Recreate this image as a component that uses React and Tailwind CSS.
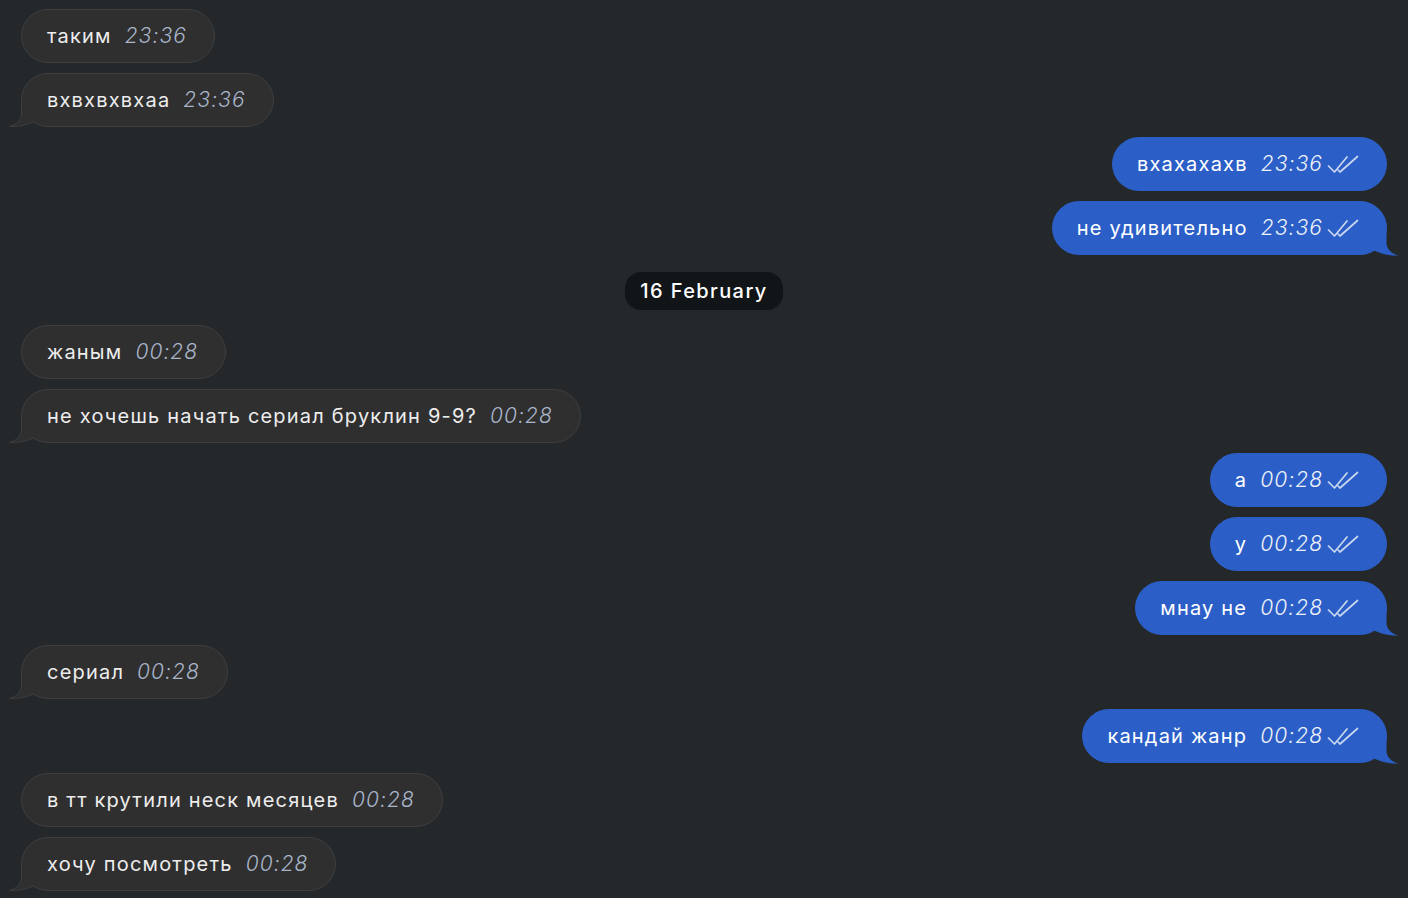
import React from 'react';

const messages = [
  { out: false, text: 'таким', time: '23:36' },
  { out: false, text: 'вхвхвхвхаа', time: '23:36', tail: true },
  { out: true, text: 'вхахахахв', time: '23:36' },
  { out: true, text: 'не удивительно', time: '23:36', tail: true },
  { date: '16 February' },
  { out: false, text: 'жаным', time: '00:28' },
  { out: false, text: 'не хочешь начать сериал бруклин 9-9?', time: '00:28', tail: true },
  { out: true, text: 'а', time: '00:28' },
  { out: true, text: 'у', time: '00:28' },
  { out: true, text: 'мнау не', time: '00:28', tail: true },
  { out: false, text: 'сериал', time: '00:28', tail: true },
  { out: true, text: 'кандай жанр', time: '00:28', tail: true },
  { out: false, text: 'в тт крутили неск месяцев', time: '00:28' },
  { out: false, text: 'хочу посмотреть', time: '00:28', tail: true },
];

const DoubleCheck = () => (
  <svg width="32" height="20" viewBox="0 0 32 20" fill="none" stroke="#c9d6ef" strokeWidth="1.7" strokeLinecap="round" strokeLinejoin="round">
    <path d="M1.5 12 L7.5 18 L20 3" />
    <path d="M11 16 L13 18 L30.5 2.5" />
  </svg>
);

// tail drawn over the bottom corner of a bubble
const Tail = ({ out }) => {
  const fill = out ? '#2b5fc7' : '#2f2f30';
  return (
    <svg
      width="50"
      height="30"
      viewBox="0 0 50 30"
      className={`absolute bottom-[-1px] pointer-events-none ${out ? 'right-[-12px] -scale-x-100' : 'left-[-13px]'}`}
    >
      <path
        d="M12.5 3 L12.5 17 C12.5 23 7 28 0.5 29.5 C8 30 18 28 25 24.5 L36 8 Z"
        fill={fill}
      />
      {!out && (
        <path
          d="M12.5 3 L12.5 17 C12.5 23 7 28 0.5 29.5 C8 30 18 28 25 24.5"
          fill="none"
          stroke="#3d3e40"
          strokeWidth="1"
        />
      )}
    </svg>
  );
};

const Bubble = ({ msg }) => (
  <div className={`flex ${msg.out ? 'justify-end' : 'justify-start'}`}>
    <div
      className={`relative h-[54px] flex items-center rounded-full pl-[25px] ${
        msg.out
          ? 'bg-[#2b5fc7] pr-[28px] text-white'
          : 'bg-[#2f2f30] border border-[#3d3e40] pr-[27px] text-[#ededed]'
      }`}
    >
      <span className="text-[20px] tracking-[0.06em] whitespace-nowrap">{msg.text}</span>
      <span
        className={`ml-[13px] text-[21px] italic font-light tracking-[0.05em] ${msg.out ? 'text-[#eef2fa]' : 'text-[#a9b5c9]'}`}
      >
        {msg.time}
      </span>
      {msg.out && (
        <span className="ml-[4px] flex items-center">
          <DoubleCheck />
        </span>
      )}
      {msg.tail && <Tail out={msg.out} />}
    </div>
  </div>
);

export default function App() {
  return (
    <div
      className="w-[1408px] h-[898px] overflow-hidden bg-[#25282a] px-[21px] pt-[9px]"
      style={{ fontFamily: 'Inter, "Noto Sans", sans-serif' }}
    >
      <div className="flex flex-col gap-[10px]">
        {messages.map((m, i) =>
          m.date ? (
            <div key={i} className="flex justify-center pt-[7px] pb-[5px]">
              <span className="h-[38px] px-[15px] flex items-center rounded-[16px] bg-[#121518] text-white text-[20px] font-medium tracking-[0.07em]">
                {m.date}
              </span>
            </div>
          ) : (
            <Bubble key={i} msg={m} />
          )
        )}
      </div>
    </div>
  );
}
